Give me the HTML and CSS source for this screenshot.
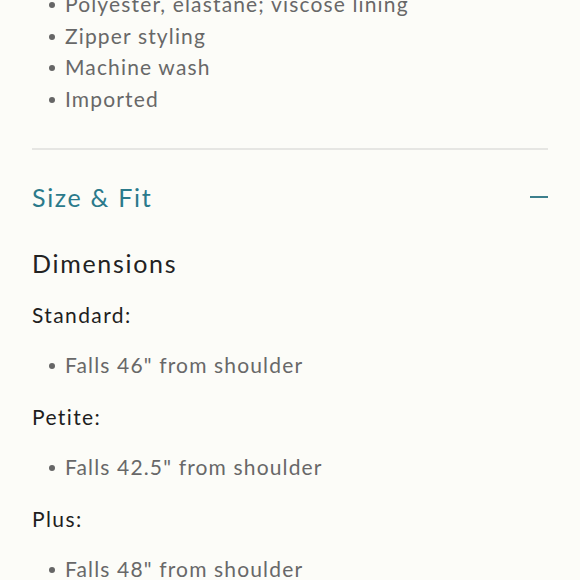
FILE: index.html
```html
<!DOCTYPE html>
<html>
<head>
<meta charset="utf-8">
<link rel="stylesheet" href="styles.css">
</head>
<body>
<div class="page">
  <ul class="bullets features">
    <li>Polyester, elastane; viscose lining</li>
    <li>Zipper styling</li>
    <li>Machine wash</li>
    <li>Imported</li>
  </ul>
  <div class="divider"></div>
  <div class="acc-head">
    <span class="acc-title">Size &amp; Fit</span>
    <span class="acc-minus"></span>
  </div>
  <h2 class="dim-title">Dimensions</h2>
  <p class="label">Standard:</p>
  <ul class="bullets dims"><li>Falls 46" from shoulder</li></ul>
  <p class="label">Petite:</p>
  <ul class="bullets dims"><li>Falls 42.5" from shoulder</li></ul>
  <p class="label">Plus:</p>
  <ul class="bullets dims"><li>Falls 48" from shoulder</li></ul>
</div>
</body>
</html>
```
FILE: styles.css
```css
html, body {
  margin: 0;
  padding: 0;
  background: #fcfcf8;
}
body {
  font-family: Lato, "Noto Sans", sans-serif;
  color: #222;
  overflow: hidden;
  height: 580px;
}
.page {
  padding: 0 32px;
}
.bullets {
  list-style: none;
  margin: 0;
  padding: 0 0 0 33px;
}
.bullets li {
  position: relative;
  font-size: 21px;
  letter-spacing: 1.15px;
  color: #686868;
  line-height: 31.7px;
  white-space: nowrap;
}
.bullets li::before {
  content: "";
  position: absolute;
  left: -16px;
  top: 50%;
  width: 6px;
  height: 6px;
  margin-top: -2px;
  border-radius: 50%;
  background: #666;
}
.features {
  margin-top: -12px;
}
.divider {
  margin-top: 33px;
  height: 2px;
  background: #e6e6e3;
}
.acc-head {
  display: flex;
  align-items: center;
  justify-content: space-between;
  padding-top: 31px;
  height: 32px;
}
.acc-title {
  font-size: 25px;
  letter-spacing: 1.7px;
  color: #2b7a8b;
  line-height: 32px;
}
.acc-minus {
  width: 18px;
  height: 2px;
  background: #3c7f8c;
}
.dim-title {
  margin: 34px 0 0;
  font-size: 25px;
  font-weight: 400;
  letter-spacing: 1.7px;
  line-height: 32px;
  color: #222;
}
.label {
  margin: 22px 0 0;
  font-size: 21px;
  letter-spacing: 1.4px;
  line-height: 30px;
  color: #1e1e1e;
}
.dim-title + .label {
  margin-top: 21px;
}
.dims {
  margin-top: 20px;
}
.dims li {
  line-height: 30px;
}
```
